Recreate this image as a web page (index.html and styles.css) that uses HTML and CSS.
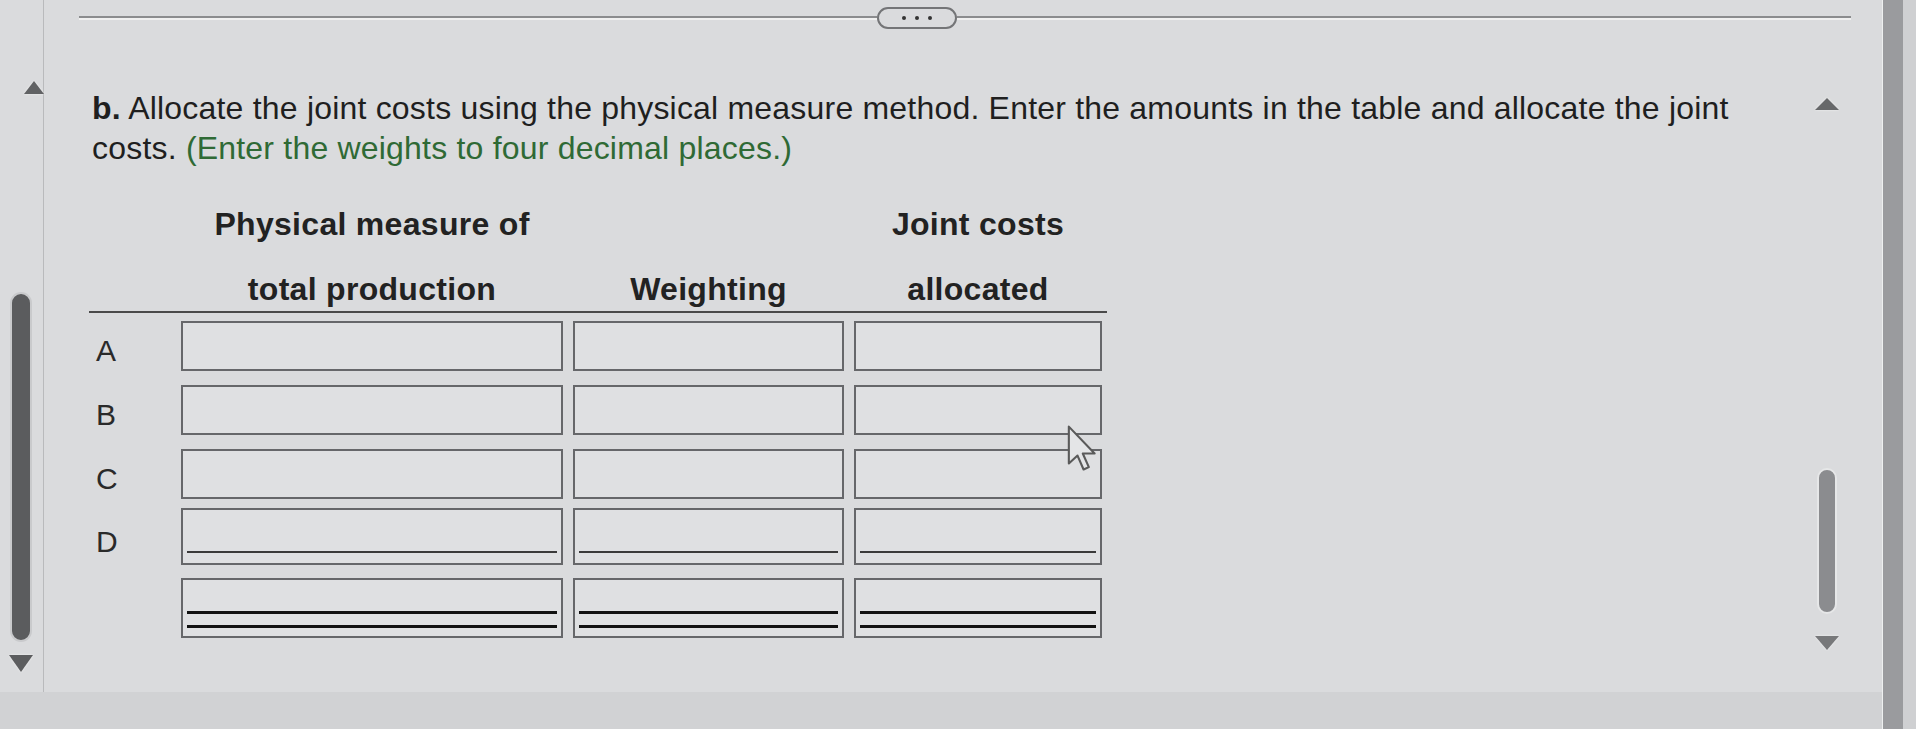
FILE: index.html
```html
<!DOCTYPE html>
<html lang="en">
<head>
<meta charset="utf-8">
<title>Joint cost allocation</title>
<link rel="stylesheet" href="styles.css">
</head>
<body>
<div class="screen">
  <div class="frame">
    <aside class="left-rail">
      <span class="tri tri-up rail-up"></span>
      <span class="rail-thumb"></span>
      <span class="tri tri-down rail-down"></span>
    </aside>
    <main class="main">
      <div class="topbar">
        <span class="rule rule-left"></span>
        <span class="pill"><i></i><i></i><i></i></span>
        <span class="rule rule-right"></span>
      </div>
      <div class="body">
        <section class="content">
          <p class="question"><b>b.</b> Allocate the joint costs using the physical measure method. Enter the amounts in the table and allocate the joint costs. <span class="hint">(Enter the weights to four decimal places.)</span></p>
          <div class="table">
            <div class="thead">
              <div class="hrow">
                <span></span><span>Physical measure of</span><span></span><span>Joint costs</span>
              </div>
              <div class="hrow">
                <span></span><span>total production</span><span>Weighting</span><span>allocated</span>
              </div>
            </div>
            <div class="tbody">
              <div class="trow">
                <span class="label">A</span>
                <span class="cell"><span class="box"></span></span>
                <span class="cell"><span class="box"></span></span>
                <span class="cell"><span class="box"></span></span>
              </div>
              <div class="trow">
                <span class="label">B</span>
                <span class="cell"><span class="box"></span></span>
                <span class="cell"><span class="box"></span></span>
                <span class="cell"><span class="box"></span></span>
              </div>
              <div class="trow">
                <span class="label">C</span>
                <span class="cell"><span class="box"></span></span>
                <span class="cell"><span class="box"></span></span>
                <span class="cell"><span class="box"></span></span>
              </div>
              <div class="trow row-d">
                <span class="label">D</span>
                <span class="cell"><span class="box single"></span></span>
                <span class="cell"><span class="box single"></span></span>
                <span class="cell"><span class="box single"></span></span>
              </div>
              <div class="trow row-total">
                <span class="label"></span>
                <span class="cell"><span class="box double"></span></span>
                <span class="cell"><span class="box double"></span></span>
                <span class="cell"><span class="box double"></span></span>
              </div>
            </div>
          </div>
        </section>
        <div class="vscroll">
          <span class="tri tri-up v-up"></span>
          <span class="v-thumb"></span>
          <span class="tri tri-down v-down"></span>
        </div>
      </div>
    </main>
  </div>
  <div class="bottom-strip"></div>
</div>
<div class="edge"></div>
<div class="edge-light"></div>
<svg class="cursor" width="34" height="50" viewBox="0 0 12 19" aria-hidden="true">
  <path d="M1 1 L1 15 L4.3 12 L6.6 17.3 L8.6 16.4 L6.3 11.2 L10.8 11.2 Z" fill="#e4e5e7" stroke="#5a5a5a" stroke-width="0.8" stroke-linejoin="round"/>
</svg>
</body>
</html>
```
FILE: styles.css
```css
* { box-sizing: border-box; }

html, body {
  margin: 0;
  padding: 0;
}

body {
  display: flex;
  width: 1916px;
  height: 729px;
  overflow: hidden;
  background: #dadbdd;
  font-family: "Liberation Sans", Arial, sans-serif;
  color: #1f1f1f;
  position: relative;
}

.screen {
  width: 1882px;
  display: flex;
  flex-direction: column;
}

.frame {
  height: 692px;
  display: flex;
}

.bottom-strip {
  flex: 1;
  background: #d1d2d4;
}

.edge {
  width: 21px;
  background: #9a9b9e;
  border-left: 1px solid #eef0f0;
}

.edge-light {
  width: 13px;
  background: #cfd0d2;
}

/* left rail */
.left-rail {
  width: 44px;
  border-right: 1px solid #b9babc;
  display: flex;
  flex-direction: column;
  align-items: center;
  padding-top: 81px;
  padding-right: 2px;
}

.tri {
  display: block;
  width: 0;
  height: 0;
  border-left: 10px solid transparent;
  border-right: 10px solid transparent;
  filter: drop-shadow(0 0 1px #f4f4f4);
}

.tri-up { border-bottom: 12px solid #616264; }
.tri-down { border-top: 14px solid #5c5d5f; }

.rail-up { margin-left: 26px; border-bottom-width: 13px; }

.rail-thumb {
  display: block;
  width: 22px;
  height: 350px;
  margin-top: 198px;
  border-radius: 11px;
  background: #5b5c5e;
  border: 2px solid #c9cacc;
}

.rail-down {
  margin-top: 13px;
  border-left-width: 12px;
  border-right-width: 12px;
  border-top-width: 17px;
}

/* main */
.main {
  flex: 1;
  display: flex;
  flex-direction: column;
  padding: 0 31px 0 35px;
}

.topbar {
  height: 36px;
  display: flex;
  align-items: flex-start;
  padding-top: 7px;
}

.rule {
  display: block;
  height: 2px;
  margin-top: 9px;
  background: #8b8c8e;
  box-shadow: 0 2px 0 #f0f0f0;
}

.rule-left { width: 798px; }
.rule-right { flex: 1; }

.pill {
  width: 80px;
  height: 22px;
  border: 2px solid #747577;
  border-radius: 11px;
  display: flex;
  align-items: center;
  justify-content: center;
  gap: 9px;
}

.pill i {
  display: block;
  width: 4px;
  height: 4px;
  border-radius: 50%;
  background: #333;
}

.body {
  flex: 1;
  display: flex;
}

.content {
  flex: 1;
}

.question {
  margin: 52px 0 0 13px;
  font-size: 32px;
  letter-spacing: 0.2px;
  line-height: 40px;
  max-width: 1700px;
  color: #1f1f1f;
}

.question b { font-weight: bold; }

.hint { color: #2f6a35; }

/* table */
.table {
  margin: 37px 0 0 10px;
  width: 1018px;
}

.thead {
  border-bottom: 2px solid #4a4a4a;
  padding-bottom: 2px;
}

.hrow,
.trow {
  display: grid;
  grid-template-columns: 87px 392px 281px 258px;
}

.hrow {
  font-size: 32px;
  letter-spacing: 0.3px;
  font-weight: bold;
  line-height: 39px;
  text-align: center;
  color: #222;
  white-space: nowrap;
}

.hrow + .hrow { margin-top: 26px; }

.tbody {
  display: flex;
  flex-direction: column;
  gap: 14px;
  padding-top: 8px;
}

.trow { height: 50px; }
.row-d { height: 57px; margin-top: -5px; }
.row-total { height: 60px; margin-top: -1px; }

.label {
  font-size: 30px;
  color: #2a2a2a;
  padding: 10px 0 0 7px;
  display: flex;
  align-items: center;
}

.cell {
  padding: 0 5px;
  display: flex;
}

.box {
  flex: 1;
  border: 2px solid #66676a;
  background: #dfe0e2;
  display: flex;
  flex-direction: column;
  justify-content: flex-end;
  padding: 0 4px;
}

.box.single::after {
  content: "";
  display: block;
  height: 2px;
  background: #3a3a3a;
  margin-bottom: 10px;
}

.box.double::after {
  content: "";
  display: block;
  height: 11px;
  border-top: 3px solid #111;
  border-bottom: 3px solid #111;
  margin-bottom: 8px;
}

/* right scroll */
.vscroll {
  width: 40px;
  display: flex;
  flex-direction: column;
  align-items: center;
  padding-top: 62px;
  padding-right: 9px;
}

.v-up {
  border-left-width: 12px;
  border-right-width: 12px;
  border-bottom-width: 12px;
  border-bottom-color: #67686a;
}

.v-thumb {
  display: block;
  width: 20px;
  height: 146px;
  margin-top: 358px;
  border-radius: 10px;
  background: #8b8c8f;
  border: 2px solid #e6e7e8;
}

.v-down {
  margin-top: 22px;
  border-left-width: 12px;
  border-right-width: 12px;
  border-top-width: 14px;
  border-top-color: #77787a;
}

.cursor {
  position: absolute;
  left: 1065px;
  top: 424px;
}
```
